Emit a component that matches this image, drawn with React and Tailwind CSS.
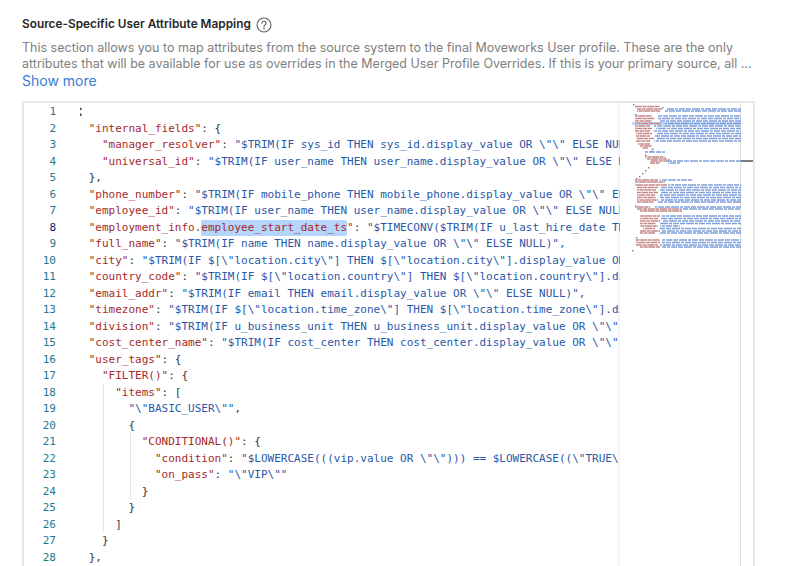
const mono = 'font-["DejaVu_Sans_Mono",monospace]'

const K = 'text-[#a52a2a]'
const V = 'text-[#2a58a8]'

const codeLines = [
  [],
  [2, ['k', '"internal_fields"'], ['p', ': {']],
  [4, ['k', '"manager_resolver"'], ['p', ': '], ['v', '"$TRIM(IF sys_id THEN sys_id.display_value OR \\"\\" ELSE NULL)",']],
  [4, ['k', '"universal_id"'], ['p', ': '], ['v', '"$TRIM(IF user_name THEN user_name.display_value OR \\"\\" ELSE NULL)"']],
  [2, ['p', '},']],
  [2, ['k', '"phone_number"'], ['p', ': '], ['v', '"$TRIM(IF mobile_phone THEN mobile_phone.display_value OR \\"\\" ELSE NULL)",']],
  [2, ['k', '"employee_id"'], ['p', ': '], ['v', '"$TRIM(IF user_name THEN user_name.display_value OR \\"\\" ELSE NULL)",']],
  [2, ['k', '"employment_info.'], ['h', 'employee_start_date_ts'], ['k', '"'], ['p', ': '], ['v', '"$TIMECONV($TRIM(IF u_last_hire_date THEN u_last_hire_date']],
  [2, ['k', '"full_name"'], ['p', ': '], ['v', '"$TRIM(IF name THEN name.display_value OR \\"\\" ELSE NULL)",']],
  [2, ['k', '"city"'], ['p', ': '], ['v', '"$TRIM(IF $[\\"location.city\\"] THEN $[\\"location.city\\"].display_value OR']],
  [2, ['k', '"country_code"'], ['p', ': '], ['v', '"$TRIM(IF $[\\"location.country\\"] THEN $[\\"location.country\\"].display_value']],
  [2, ['k', '"email_addr"'], ['p', ': '], ['v', '"$TRIM(IF email THEN email.display_value OR \\"\\" ELSE NULL)",']],
  [2, ['k', '"timezone"'], ['p', ': '], ['v', '"$TRIM(IF $[\\"location.time_zone\\"] THEN $[\\"location.time_zone\\"].display_value']],
  [2, ['k', '"division"'], ['p', ': '], ['v', '"$TRIM(IF u_business_unit THEN u_business_unit.display_value OR \\"\\" ELSE']],
  [2, ['k', '"cost_center_name"'], ['p', ': '], ['v', '"$TRIM(IF cost_center THEN cost_center.display_value OR \\"\\" ELSE NULL)"']],
  [2, ['k', '"user_tags"'], ['p', ': {']],
  [4, ['k', '"FILTER()"'], ['p', ': {']],
  [6, ['k', '"items"'], ['p', ': [']],
  [8, ['v', '"\\"BASIC_USER\\""'], ['p', ',']],
  [8, ['p', '{']],
  [10, ['k', '"CONDITIONAL()"'], ['p', ': {']],
  [12, ['k', '"condition"'], ['p', ': '], ['v', '"$LOWERCASE(((vip.value OR \\"\\"))) == $LOWERCASE((\\"TRUE\\"))",']],
  [12, ['k', '"on_pass"'], ['p', ': '], ['v', '"\\"VIP\\""']],
  [10, ['p', '}']],
  [8, ['p', '}']],
  [6, ['p', ']']],
  [4, ['p', '}']],
  [2, ['p', '},']],
]

// minimap rows in page pixels: [y, red from, red to, blue from, blue to]
const miniRows = [
  [107.5, 635, 660], [110, 637, 662, 667, 741], [112, 637, 660, 664, 741],
  [117, 635, 652, 658, 741], [119.5, 635, 655, 658, 741], [122, 635, 652, 660, 741], [124.5, 635, 662, 665, 741],
  [127, 635, 650, 654, 741], [129.5, 635, 652, 656, 741], [132, 635, 650, 654, 741], [134.5, 636, 652, 656, 741],
  [137, 636, 650, 654, 741], [139.5, 636, 654, 657, 741], [142, 636, 650, 654, 741],
  [145, 638, 650], [147, 640, 652], [149, 642, 648],
  [153, 0, 0, 645, 665],
  [158, 645, 665], [160, 647, 667], [162, 650, 668, 668, 741], [164, 650, 660, 668, 680],
  [181, 635, 658, 660, 692], [183, 635, 665], [186, 635, 667, 668, 741],
  [188.5, 637, 658, 661, 741], [191, 637, 656, 660, 741], [193.5, 637, 658, 661, 741], [196, 637, 655, 659, 741],
  [198.5, 637, 656, 660, 741], [201, 637, 658, 661, 741], [203, 637, 654, 658, 741],
  [208, 635, 650, 655, 741], [210, 637, 680, 680, 741], [212, 640, 682],
  [217, 640, 660, 662, 741], [219.5, 640, 658, 660, 741], [222, 640, 660, 662, 741], [224.5, 640, 656, 660, 741],
  [227, 640, 658, 660, 680], [229.5, 643, 655, 660, 741], [232, 640, 660, 662, 741], [234, 640, 655, 660, 741],
  [241, 635, 660, 662, 741], [243.5, 636, 660, 662, 741], [246, 636, 658, 660, 741], [248, 640, 660, 662, 741],
]

const miniDots = [
  [633, 105], [662, 108], [635, 115], [652, 149.5], [651, 151.5], [645, 155.5], [668, 160],
  [648, 168], [645, 171], [642, 174], [639, 177], [636, 179], [635, 206.5], [636, 238], [632, 251],
]

function Minimap() {
  const ox = 632
  const oy = 104
  return (
    <svg width="109" height="152" viewBox="0 0 109 152" className="blur-[0.6px]" aria-hidden="true">
      <rect x="0" y="19" width="109" height="3" fill="#c5dbf9" />
      {miniRows.map(([y, rs, re, bs, be], i) => (
        <g key={i} strokeWidth="1.6">
          {rs > 0 && <line x1={rs - ox} x2={re - ox} y1={y - oy} y2={y - oy} stroke="#c58886" strokeDasharray="7 0.6 4 0.6" strokeDashoffset={i * 3} />}
          {bs > 0 && <line x1={bs - ox} x2={be - ox} y1={y - oy} y2={y - oy} stroke="#7fa0da" strokeDasharray="5 1 8 1 3 1 6 1" strokeDashoffset={i * 7} />}
        </g>
      ))}
      {miniDots.map(([x, y], i) => (
        <rect key={i} x={x - ox} y={y - oy} width="1.5" height="1.5" fill="#8a8a8a" />
      ))}
    </svg>
  )
}

function HelpIcon() {
  return (
    <svg width="16" height="16" viewBox="0 0 16 16" fill="none" stroke="#5f5f5f" strokeWidth="1.1" strokeLinecap="round" aria-hidden="true">
      <circle cx="8" cy="8" r="7" />
      <path d="M5.9 6.3c0-1.2.9-2 2.1-2s2.1.8 2.1 1.9c0 1.7-2.1 1.6-2.1 3.3" />
      <circle cx="8" cy="11.5" r="0.35" fill="#5f5f5f" />
    </svg>
  )
}

export default function App() {
  return (
    <div className='h-[566px] w-[785px] overflow-hidden bg-white font-["Inter",sans-serif]'>
      <div className="pl-[22px] pr-[30px] pt-[16px]">
        {/* Header */}
        <div className="flex h-[18px] items-center gap-[5px]">
          <h2 className="text-[11.85px] font-semibold text-[#262626]">Source-Specific User Attribute Mapping</h2>
          <HelpIcon />
        </div>
        <p className="mt-[6px] w-[733px] text-[12.5px] leading-[15.5px] text-[#808080]">
          This section allows you to map attributes from the source system to the final Moveworks User profile. These are the only attributes that will be available for use as overrides in the Merged User Profile Overrides. If this is your primary source, all ...
        </p>
        <button type="button" className="block text-[14px] leading-[20px] text-[#3a7bd5]">Show more</button>

        {/* Editor */}
        <div className="mt-[10px] flex h-[500px] w-[733px] border-2 border-b-0 border-[#e8e8e8]">
          <div className={`relative min-w-0 flex-1 overflow-hidden pt-[1px] text-[11px] leading-[16.5px] ${mono}`}>
            {codeLines.map(([indent, ...parts], i) => (
              <div key={i} className="flex h-[16.5px] whitespace-pre">
                <span className={`w-[32px] shrink-0 text-right ${i === 7 ? 'text-[#0b216f]' : 'text-[#237893]'}`}>{i + 1}</span>
                <span className="relative ml-[19.5px] flex-1 overflow-hidden">
                  {i === 0 && <span className="ml-[2px] inline-block scale-y-150 text-[#333333]">:</span>}
                  {Array.from({ length: indent }, () => ' ').join('')}
                  {parts.map(([kind, text], j) => {
                    if (kind === 'k') return <span key={j} className={K}>{text}</span>
                    if (kind === 'v') return <span key={j} className={V}>{text}</span>
                    if (kind === 'h') return <span key={j} className={`inline-block h-[16.5px] rounded-[2px] bg-[#b5d5fb] ${K}`}>{text}</span>
                    return <span key={j} className="text-[#333333]">{text}</span>
                  })}
                </span>
              </div>
            ))}
            {/* Indent guides */}
            <div className="absolute left-[79px] top-[280px] h-[149px] w-px bg-[#e3e3e3]" />
            <div className="absolute left-[106px] top-[329px] h-[67px] w-px bg-[#e3e3e3]" />
          </div>

          {/* Minimap */}
          <div className="w-[121px] shrink-0 border-r border-[#dddddd] pl-[12px] shadow-[-2px_0_3px_rgba(0,0,0,0.06)]">
            <Minimap />
          </div>

          {/* Overview ruler */}
          <div className="relative w-[12px] shrink-0">
            <div className="absolute left-0 right-0 top-[57px] h-[2px] bg-[#7a7a7a]" />
          </div>
        </div>
      </div>
    </div>
  )
}
